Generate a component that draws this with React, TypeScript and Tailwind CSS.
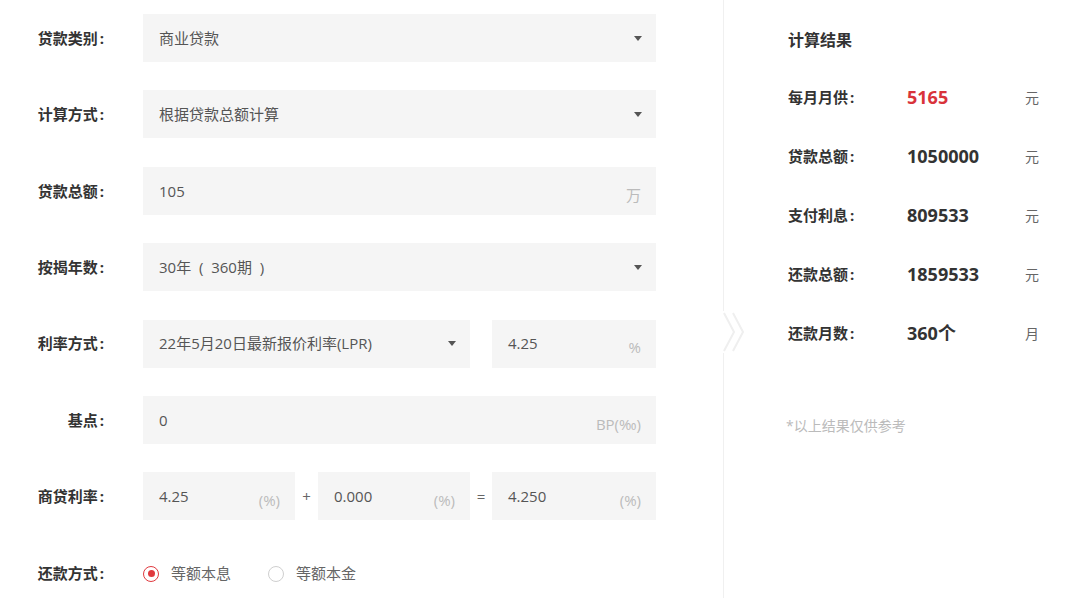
import React from "react";

const font = "font-['Open_Sans','Noto_Sans_CJK_SC',sans-serif]";

function Label({ text }: { text: string }) {
  return (
    <div className="w-[104px] shrink-0 text-right text-[15px] font-bold text-[#333]">
      {text}
      <span className="ml-[2px]">:</span>
    </div>
  );
}

function Arrow() {
  return (
    <svg width="8" height="5" viewBox="0 0 8 5" className="shrink-0">
      <path d="M0 0 L8 0 L4 5 Z" fill="#555" />
    </svg>
  );
}

function Select({ value, className }: { value: string; className: string }) {
  return (
    <div className={`flex h-[48px] items-center justify-between bg-[#f5f5f5] pl-[16px] pr-[14px] ${className}`}>
      <span className="whitespace-pre text-[15px] text-[#555]">{value}</span>
      <Arrow />
    </div>
  );
}

function Input({ value, unit, className }: { value: string; unit: string; className: string }) {
  return (
    <div className={`flex h-[48px] items-center justify-between bg-[#f5f5f5] pl-[16px] pr-[15px] ${className}`}>
      <span className="text-[15px] text-[#555]">{value}</span>
      <span className="translate-y-[4px] text-[15px] text-[#bbb]">{unit}</span>
    </div>
  );
}

function Row({ label, children }: { label: string; children: React.ReactNode }) {
  return (
    <div className="flex h-[48px] items-center">
      <Label text={label} />
      <div className="ml-[39px] flex items-center">{children}</div>
    </div>
  );
}

function Radio({ checked, text }: { checked: boolean; text: string }) {
  return (
    <div className="flex items-center">
      {checked ? (
        <span className="flex size-[16px] items-center justify-center rounded-full border-[1.5px] border-[#e0393e]">
          <span className="size-[7px] rounded-full bg-[#e0393e]" />
        </span>
      ) : (
        <span className="size-[16px] rounded-full border-[1.5px] border-[#cfcfcf]" />
      )}
      <span className="ml-[12px] text-[15px] text-[#666]">{text}</span>
    </div>
  );
}

const results = [
  { label: "每月月供", value: "5165", unit: "元", red: true },
  { label: "贷款总额", value: "1050000", unit: "元" },
  { label: "支付利息", value: "809533", unit: "元" },
  { label: "还款总额", value: "1859533", unit: "元" },
  { label: "还款月数", value: "360个", unit: "月" },
];

export default function App() {
  return (
    <div className={`flex h-[598px] w-[1080px] overflow-hidden bg-white ${font}`}>
      {/* form */}
      <div className="flex w-[723px] shrink-0 flex-col gap-[28.4px] pt-[14px]">
        <Row label="贷款类别">
          <Select value="商业贷款" className="w-[513px]" />
        </Row>
        <Row label="计算方式">
          <Select value="根据贷款总额计算" className="w-[513px]" />
        </Row>
        <Row label="贷款总额">
          <Input value="105" unit="万" className="w-[513px]" />
        </Row>
        <Row label="按揭年数">
          <Select value="30年  (  360期  )" className="w-[513px]" />
        </Row>
        <Row label="利率方式">
          <Select value="22年5月20日最新报价利率(LPR)" className="w-[327px]" />
          <Input value="4.25" unit="%" className="ml-[22px] w-[164px]" />
        </Row>
        <Row label="基点">
          <Input value="0" unit="BP(‰)" className="w-[513px]" />
        </Row>
        <Row label="商贷利率">
          <Input value="4.25" unit="(%)" className="w-[152px]" />
          <span className="w-[23px] text-center text-[15px] text-[#666]">+</span>
          <Input value="0.000" unit="(%)" className="w-[152px]" />
          <span className="w-[22px] text-center text-[15px] text-[#666]">=</span>
          <Input value="4.250" unit="(%)" className="w-[164px]" />
        </Row>
        <div className="mt-[1px] flex h-[48px] items-center">
          <Label text="还款方式" />
          <div className="ml-[39px] flex items-center gap-[37px]">
            <Radio checked text="等额本息" />
            <Radio checked={false} text="等额本金" />
          </div>
        </div>
      </div>

      {/* divider */}
      <div className="relative w-px shrink-0 bg-[#f0f0f0]">
        <svg width="26" height="42" viewBox="0 0 26 42" className="absolute left-[-1px] top-[311px]">
          <rect x="0" y="0" width="3" height="42" fill="#fff" />
          <path d="M2 2 L12 21 L2 40" fill="none" stroke="#efefef" strokeWidth="2" />
          <path d="M11 2 L21 21 L11 40" fill="none" stroke="#efefef" strokeWidth="2" />
        </svg>
      </div>

      {/* results */}
      <div className="flex flex-1 flex-col pl-[64px] pt-[29px]">
        <div className="text-[16px] font-bold leading-[22px] text-[#333]">计算结果</div>
        <div className="mt-[17px] flex flex-col">
          {results.map((r) => (
            <div key={r.label} className="flex h-[59px] items-center">
              <div className="w-[119px] text-[15px] font-bold text-[#333]">
                {r.label}
                <span className="ml-[2px]">:</span>
              </div>
              <div className={`w-[118px] text-[18px] font-bold ${r.red ? "text-[#d9333b]" : "text-[#333]"}`}>
                {r.value}
              </div>
              <div className="text-[14px] text-[#666]">{r.unit}</div>
            </div>
          ))}
        </div>
        <div className="mt-[53px] ml-[-2px] text-[14px] leading-[20px] text-[#bbb]">*以上结果仅供参考</div>
      </div>
    </div>
  );
}
